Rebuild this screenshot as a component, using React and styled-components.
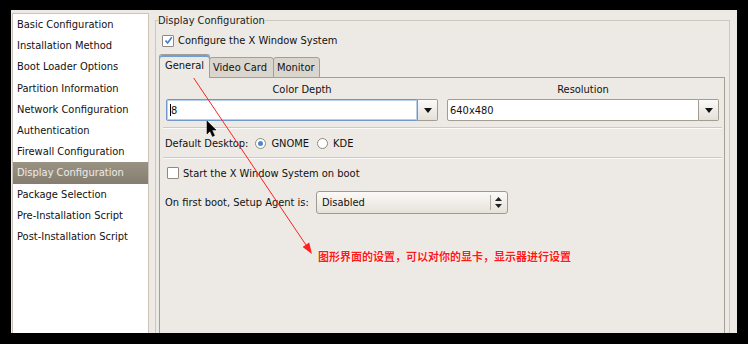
import React from "react";
import styled, { createGlobalStyle } from "styled-components";

const GlobalStyle = createGlobalStyle`
  body {
    margin: 0;
    background: #000;
    font-family: "DejaVu Sans Condensed", "DejaVu Sans", sans-serif;
    font-stretch: condensed;
    font-size: 11px;
    color: #111;
  }
`;

const Screen = styled.div`
  position: relative;
  width: 748px;
  height: 344px;
  box-sizing: border-box;
  padding: 10px 11px 11px 11px;
  background: #000;
`;

const Window = styled.div`
  display: flex;
  height: 100%;
  background: #edeae5;
`;

const Sidebar = styled.ul`
  list-style: none;
  margin: 3px 6px 0 1px;
  padding: 0;
  width: 137px;
  box-sizing: border-box;
  background: #fff;
  border: 1px solid #cbc3b8;
  border-bottom: none;
`;

const SideItem = styled.li`
  height: 21.2px;
  line-height: 21.2px;
  padding-left: 4px;
  white-space: nowrap;
  color: ${(p) => (p.$active ? "#efebe5" : "#111")};
  background: ${(p) =>
    p.$active ? "linear-gradient(#9a9384, #857e70)" : "transparent"};
`;

const Frame = styled.fieldset`
  flex: 1;
  margin: 3.5px 7px 0 0;
  padding: 0 4px 0 3px;
  border: 1px solid #cdc7be;
  border-bottom: none;
  min-width: 0;
  display: flex;
  flex-direction: column;
`;

const FrameTitle = styled.legend`
  padding: 0;
  margin-left: -1px;
  line-height: 13px;
  color: #222;
`;

const CheckRow = styled.label`
  display: flex;
  align-items: center;
  gap: 4px;
  height: 14px;
  margin: ${(p) => p.$margin || "0"};
`;

const Box = styled.span`
  width: 10px;
  height: 10px;
  border: 1px solid #8e8981;
  border-radius: 1px;
  background: #fff;
  display: flex;
  align-items: center;
  justify-content: center;
  flex: none;
`;

const Notebook = styled.div`
  flex: 1;
  display: flex;
  flex-direction: column;
  margin-top: 6.5px;
`;

const TabRow = styled.div`
  display: flex;
  align-items: flex-end;
  height: 24px;
  margin-bottom: -1px;
  position: relative;
  z-index: 1;
`;

const Tab = styled.div`
  box-sizing: border-box;
  height: ${(p) => (p.$active ? "24px" : "21px")};
  padding: ${(p) => (p.$active ? "4px 4px 0 5px" : "3px 4px 0 3px")};
  width: ${(p) => p.$w}px;
  border: 1px solid #a49e93;
  border-bottom: ${(p) => (p.$active ? "none" : "1px solid #a49e93")};
  border-radius: 3px 3px 0 0;
  background: ${(p) => (p.$active ? "#edeae5" : "#dbd6cd")};
  box-shadow: ${(p) => (p.$active ? "inset 0 2px 0 #6f9fd6" : "none")};
  white-space: nowrap;
  line-height: 14px;
  margin-left: ${(p) => (p.$active ? "0" : "-1px")};
`;

const Panel = styled.div`
  flex: 1;
  border: 1px solid #a49e93;
  border-bottom: none;
  padding: 0 5px 0 6px;
  display: flex;
  flex-direction: column;
`;

const Columns = styled.div`
  display: grid;
  grid-template-columns: 1fr 1fr;
  gap: 9px;
  padding-top: 5px;
`;

const Column = styled.div`
  display: flex;
  flex-direction: column;
  gap: 2px;
`;

const ColumnLabel = styled.div`
  text-align: center;
  line-height: 14px;
`;

const Combo = styled.div`
  display: flex;
  height: 22px;
`;

const ComboEntry = styled.div`
  flex: 1;
  display: flex;
  align-items: center;
  padding-left: 2px;
  background: #fff;
  border: 1px solid ${(p) => (p.$focused ? "#6f98cc" : "#a29c91")};
  border-radius: 2px 0 0 2px;
  box-shadow: ${(p) => (p.$focused ? "inset 0 0 0 1px #b8cfea" : "none")};
`;

const Caret = styled.span`
  width: 1px;
  height: 12px;
  background: #000;
  margin: 0 0 0 1px;
`;

const ComboButton = styled.div`
  width: 19px;
  display: flex;
  align-items: center;
  justify-content: center;
  border: 1px solid #a29c91;
  border-left: none;
  border-radius: 0 2px 2px 0;
  background: linear-gradient(#fbfaf8, #e4e0d9);
`;

const Separator = styled.div`
  height: 1px;
  margin: ${(p) => p.$margin} -3px 0;
  background: #cfc9c0;
  box-shadow: 0 1px 0 #fbfaf8;
`;

const Row = styled.div`
  display: flex;
  align-items: center;
  height: ${(p) => p.$h || 14}px;
  margin-top: ${(p) => p.$mt}px;
  margin-left: ${(p) => p.$ml || 0}px;
`;

const Radio = styled.span`
  width: 9px;
  height: 9px;
  border-radius: 50%;
  border: 1px solid #8e8981;
  background: #fff;
  margin: 0 5px 0 ${(p) => p.$ml}px;
  display: flex;
  align-items: center;
  justify-content: center;
  &::after {
    content: "";
    width: 5px;
    height: 5px;
    border-radius: 50%;
    background: ${(p) => (p.$checked ? "#4f87cf" : "transparent")};
  }
`;

const SelectButton = styled.div`
  width: 192px;
  height: 23px;
  box-sizing: border-box;
  margin-left: 7px;
  display: flex;
  align-items: center;
  border: 1px solid #9f998e;
  border-radius: 3px;
  background: linear-gradient(#fbfaf8, #e6e2da);
`;

const SelectText = styled.span`
  flex: 1;
  padding-left: 5px;
`;

const SelectDivider = styled.span`
  width: 1px;
  height: 15px;
  background: #b3ada3;
  margin-right: 4px;
`;

const Overlay = styled.svg`
  position: absolute;
  left: 0;
  top: 0;
  pointer-events: none;
`;

const Note = styled.div`
  position: absolute;
  left: 318px;
  top: 249px;
  font-family: "Noto Sans CJK SC", sans-serif;
  font-size: 11px;
  font-weight: 600;
  line-height: 14px;
  color: #ff1a1a;
  text-shadow: 0 0 2px #fff, 0 0 1px #fff;
  white-space: nowrap;
`;

const DownArrow = () => (
  <svg width="8" height="5" viewBox="0 0 8 5">
    <polygon points="0,0 8,0 4,5" fill="#111" />
  </svg>
);

const UpDown = () => (
  <svg width="7" height="11" viewBox="0 0 7 11">
    <polygon points="3.5,0 7,4 0,4" fill="#222" />
    <polygon points="0,7 7,7 3.5,11" fill="#222" />
  </svg>
);

const Check = () => (
  <svg width="9" height="9" viewBox="0 0 9 9">
    <path d="M1.5 4.5 L3.6 7 L7.8 1.2" stroke="#3f7ccb" strokeWidth="1.6" fill="none" />
  </svg>
);

const sections = [
  "Basic Configuration",
  "Installation Method",
  "Boot Loader Options",
  "Partition Information",
  "Network Configuration",
  "Authentication",
  "Firewall Configuration",
  "Display Configuration",
  "Package Selection",
  "Pre-Installation Script",
  "Post-Installation Script",
];

export default function App() {
  return (
    <>
      <GlobalStyle />
      <Screen>
        <Window>
          <Sidebar>
            {sections.map((s) => (
              <SideItem key={s} $active={s === "Display Configuration"}>
                {s}
              </SideItem>
            ))}
          </Sidebar>
          <Frame>
            <FrameTitle>Display Configuration</FrameTitle>
            <CheckRow $margin="7px 0 0 3px">
              <Box>
                <Check />
              </Box>
              Configure the X Window System
            </CheckRow>
            <Notebook>
              <TabRow>
                <Tab $active $w={51}>General</Tab>
                <Tab $w={65}>Video Card</Tab>
                <Tab $w={47}>Monitor</Tab>
              </TabRow>
              <Panel>
                <Columns>
                  <Column>
                    <ColumnLabel>Color Depth</ColumnLabel>
                    <Combo>
                      <ComboEntry $focused>
                        <Caret />8
                      </ComboEntry>
                      <ComboButton>
                        <DownArrow />
                      </ComboButton>
                    </Combo>
                  </Column>
                  <Column>
                    <ColumnLabel>Resolution</ColumnLabel>
                    <Combo>
                      <ComboEntry>640x480</ComboEntry>
                      <ComboButton>
                        <DownArrow />
                      </ComboButton>
                    </Combo>
                  </Column>
                </Columns>
                <Separator $margin="6px" />
                <Row $mt={8} $ml={-1}>
                  Default Desktop:
                  <Radio $checked $ml={7} />
                  GNOME
                  <Radio $ml={8} />
                  KDE
                </Row>
                <Separator $margin="7px" />
                <CheckRow $margin="8px 0 0 1px">
                  <Box />
                  Start the X Window System on boot
                </CheckRow>
                <Row $mt={11} $h={23} $ml={-1}>
                  On first boot, Setup Agent is:
                  <SelectButton>
                    <SelectText>Disabled</SelectText>
                    <SelectDivider />
                    <UpDown />
                    <span style={{ width: 5 }} />
                  </SelectButton>
                </Row>
              </Panel>
            </Notebook>
          </Frame>
        </Window>
        <Overlay width="748" height="344" viewBox="0 0 748 344">
          <line x1="193" y1="77" x2="306" y2="245" stroke="#ff2020" strokeWidth="1" />
          <polygon points="312,254 302.6,247 309.2,242.6" fill="#ff2020" />
          <path
            d="M207 121 L207 134 L210 131 L212.5 136.5 L214.5 135.5 L212 130 L216 130 Z"
            fill="#000"
            stroke="#000"
            strokeWidth="0.5"
          />
        </Overlay>
        <Note>图形界面的设置，可以对你的显卡，显示器进行设置</Note>
      </Screen>
    </>
  );
}
